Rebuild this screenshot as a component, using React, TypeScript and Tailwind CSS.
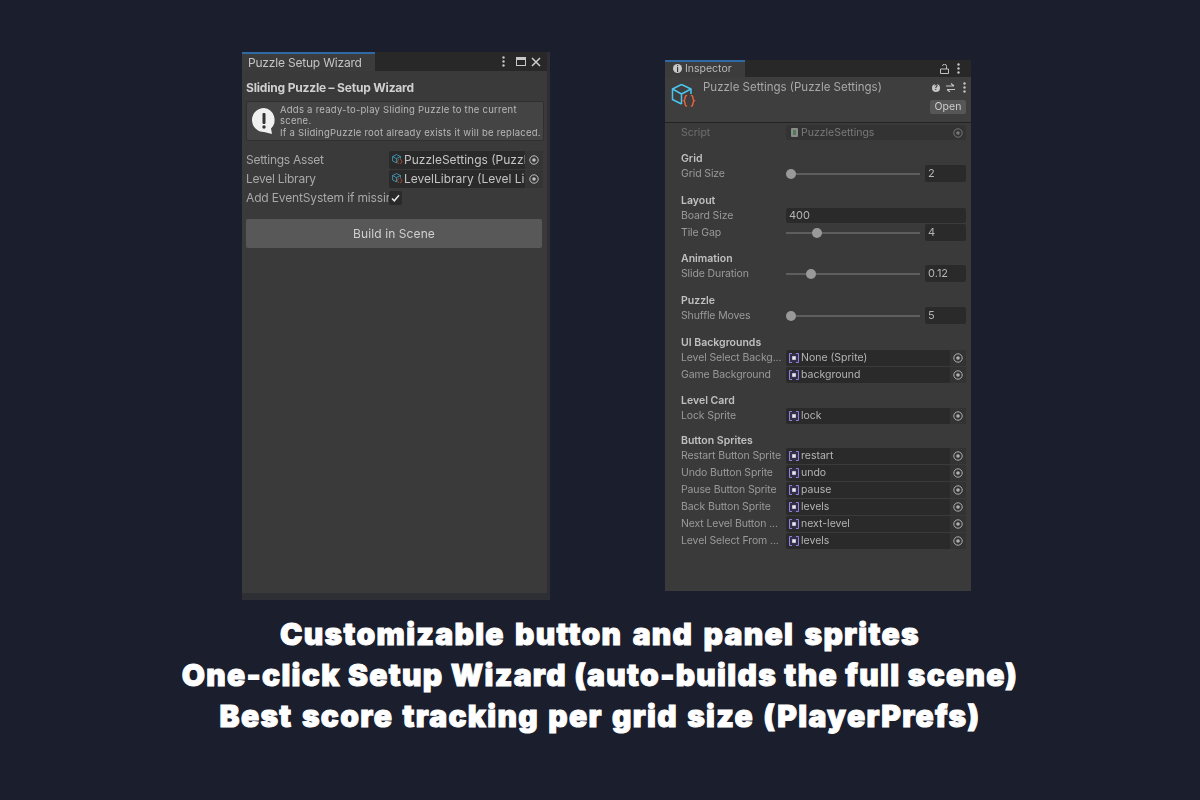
import type { ReactNode } from "react";

function Dots({ className = "" }: { className?: string }) {
  return (
    <svg width="3" height="11" viewBox="0 0 3 11" className={className}>
      <circle cx="1.5" cy="1.5" r="1.2" fill="#c4c4c4" />
      <circle cx="1.5" cy="5.5" r="1.2" fill="#c4c4c4" />
      <circle cx="1.5" cy="9.5" r="1.2" fill="#c4c4c4" />
    </svg>
  );
}

function Target({ color = "#c0c0c0" }: { color?: string }) {
  return (
    <svg width="10" height="10" viewBox="0 0 10 10">
      <circle cx="5" cy="5" r="4.2" fill="none" stroke={color} strokeWidth="1" />
      <circle cx="5" cy="5" r="1.8" fill={color} />
    </svg>
  );
}

function SpriteIcon() {
  return (
    <svg width="10" height="10" viewBox="0 0 10 10" className="shrink-0">
      <rect x="0.5" y="0.5" width="9" height="9" fill="#34304a" />
      <path d="M3 0.5 H0.5 V9.5 H3 M7 0.5 H9.5 V9.5 H7" fill="none" stroke="#8f7fe0" strokeWidth="1" />
      <rect x="3.2" y="3.2" width="3.6" height="3.6" fill="#e8e6f4" />
    </svg>
  );
}

function ScriptableIcon({ size = 26 }: { size?: number }) {
  return (
    <svg width={size} height={size} viewBox="0 0 26 26">
      <g fill="none" stroke="#4cc4ee" strokeWidth="1.5" strokeLinejoin="round">
        <path d="M10.5 1.5 L20 6 L20 11 M10.5 1.5 L1.5 6 L1.5 16.5 L10.5 21" />
        <path d="M1.5 6 L10.5 11 L20 6 M10.5 11 L10.5 21" />
      </g>
      <g fill="none" stroke="#e8603a" strokeWidth="1.5" strokeLinecap="round">
        <path d="M15.5 12.5 C13.5 12.5 14.5 17 13 17.7 C14.5 18.4 13.5 23 15.5 23" />
        <path d="M20.5 12.5 C22.5 12.5 21.5 17 23 17.7 C21.5 18.4 22.5 23 20.5 23" />
      </g>
    </svg>
  );
}

function TabHeader({
  tabWidth,
  height,
  tab,
  right,
}: {
  tabWidth: string;
  height: string;
  tab: ReactNode;
  right: ReactNode;
}) {
  return (
    <div className={`flex ${height} bg-[#282828]`}>
      <div className={`${tabWidth} flex items-center border-t-2 border-[#2f6aa3] bg-[#3c3c3c]`}>{tab}</div>
      <div className="flex flex-1 items-center justify-end">{right}</div>
    </div>
  );
}

function WizardField({ label, value }: { label: string; value: string }) {
  return (
    <div className="flex h-[19px] items-center">
      <div className="w-[143px] overflow-hidden whitespace-nowrap text-[12px] tracking-[-0.25px] text-[#a8a8a8]">{label}</div>
      <div className="flex h-[18px] w-[154px] items-center rounded-[2px] bg-[#2a2a2a] pl-[3px]">
        <ScriptableIcon size={11} />
        <div className="ml-px flex-1 overflow-hidden whitespace-nowrap text-[12px] text-[#c4c4c4]">{value}</div>
        <div className="flex h-[18px] w-[18px] shrink-0 items-center justify-center rounded-r-[2px] bg-[#353535]">
          <Target />
        </div>
      </div>
    </div>
  );
}

function WizardPanel() {
  return (
    <div className="flex h-[548px] w-[308px] flex-col bg-[#2d2f34] pr-[3px] pb-[7px] blur-[0.35px]">
      <TabHeader
        tabWidth="w-[133px]"
        height="h-[19px]"
        tab={<span className="ml-[6px] text-[12px] tracking-[-0.2px] text-[#c4c4c4]">Puzzle Setup Wizard</span>}
        right={
          <div className="flex items-center">
            <Dots className="mr-[11px]" />
            <div className="mr-[5px] h-[9px] w-[10px] border border-t-[3px] border-[#c8c8c8]" />
            <svg width="10" height="10" viewBox="0 0 10 10" className="mr-[6px]">
              <path d="M1 1 L9 9 M9 1 L1 9" stroke="#d0d0d0" strokeWidth="1.5" />
            </svg>
          </div>
        }
      />
      <div className="flex-1 bg-[#3a3a3a] pl-[4px] pr-[4px]">
        <div className="mt-[9px] h-[16px] text-[12px] font-bold leading-[16px] tracking-[-0.18px] text-[#d0d0d0]">
          Sliding Puzzle – Setup Wizard
        </div>
        <div className="mt-[5px] flex h-[40px] w-[298px] items-center rounded-[2px] border border-[#303030] bg-[#444444]">
          <svg width="26" height="28" viewBox="0 0 26 28" className="ml-[4px] shrink-0">
            <path d="M13 1 A12 12 0 1 0 13 25 L21 27 L20 21.5 A12 12 0 0 0 13 1 Z" fill="#f0f0f0" />
            <rect x="11.5" y="6" width="3" height="11" rx="1" fill="#333" />
            <circle cx="13" cy="20" r="1.7" fill="#333" />
          </svg>
          <div className="ml-[3px] whitespace-nowrap text-[9.5px] leading-[11.5px] tracking-[0.25px] text-[#b8b8b8]">
            Adds a ready-to-play Sliding Puzzle to the current
            <br />
            scene.
            <br />
            If a SlidingPuzzle root already exists it will be replaced.
          </div>
        </div>
        <div className="mt-[9px] flex flex-col">
          <WizardField label="Settings Asset" value="PuzzleSettings (Puzzle Settings)" />
          <WizardField label="Level Library" value="LevelLibrary (Level Library)" />
          <div className="flex h-[19px] items-center">
            <div className="w-[143px] overflow-hidden whitespace-nowrap text-[12px] tracking-[-0.15px] text-[#a8a8a8]">
              Add EventSystem if missing
            </div>
            <div className="flex h-[14px] w-[13px] items-center justify-center rounded-[2px] bg-[#2a2a2a]">
              <svg width="9" height="8" viewBox="0 0 9 8">
                <path d="M1 4.5 L3.3 6.8 L8 1.2" fill="none" stroke="#e8e8e8" strokeWidth="1.5" />
              </svg>
            </div>
          </div>
        </div>
        <div className="mt-[12px] flex h-[29px] w-[296px] items-center justify-center rounded-[2px] bg-[#585858] text-[12px] tracking-[0.1px] text-[#d0d0d0]">
          Build in Scene
        </div>
      </div>
    </div>
  );
}

function GroupTitle({ children, className = "" }: { children: ReactNode; className?: string }) {
  return <div className={`h-[14px] pt-px text-[10.5px] font-semibold leading-[14px] text-[#c0c0c0] ${className}`}>{children}</div>;
}

function InspectorRow({ label, children }: { label: string; children: ReactNode }) {
  return (
    <div className="flex h-[17px] items-center">
      <div className="w-[105px] whitespace-nowrap text-[10.5px] tracking-[-0.12px] text-[#9a9a9a]">{label}</div>
      <div className="flex w-[180px] items-center">{children}</div>
    </div>
  );
}

function SliderRow({ label, value, thumb }: { label: string; value: string; thumb: string }) {
  return (
    <InspectorRow label={label}>
      <div className="relative mr-[5px] h-[2px] w-[134px] bg-[#5e5e5e]">
        <div className={`absolute top-[-4px] h-[10px] w-[10px] rounded-full bg-[#999999] ${thumb}`} />
      </div>
      <div className="flex h-[17px] w-[41px] items-center rounded-[2px] bg-[#2a2a2a] pl-[3px] text-[11px] text-[#b4b4b4]">{value}</div>
    </InspectorRow>
  );
}

function SpriteRow({ label, value }: { label: string; value: string }) {
  return (
    <InspectorRow label={label}>
      <div className="flex h-[16px] w-full items-center rounded-[2px] bg-[#2a2a2a] pl-[3px]">
        <SpriteIcon />
        <div className="ml-[2px] flex-1 text-[10.5px] text-[#b4b4b4]">{value}</div>
        <div className="flex h-[16px] w-[16px] items-center justify-center rounded-r-[2px] bg-[#333333]">
          <Target color="#b0b0b0" />
        </div>
      </div>
    </InspectorRow>
  );
}

function InspectorPanel() {
  return (
    <div className="flex h-[531px] w-[306px] flex-col blur-[0.35px]">
      <TabHeader
        tabWidth="w-[80px]"
        height="h-[17px]"
        tab={
          <div className="ml-[8px] flex -translate-y-px items-center gap-[3px]">
            <div className="flex h-[9px] w-[9px] items-center justify-center rounded-full bg-[#c8c8c8] text-[8px] font-bold leading-none text-[#333]">
              i
            </div>
            <span className="text-[10.5px] text-[#b8b8b8]">Inspector</span>
          </div>
        }
        right={
          <div className="flex items-center">
            <svg width="9" height="10" viewBox="0 0 9 10" className="mr-[8px]">
              <path d="M0.5 9.5 V5 H8.5 V9.5 Z M6.5 5 V2.5 A2 2 0 0 0 2.5 2" fill="none" stroke="#c0c0c0" strokeWidth="1" />
            </svg>
            <Dots className="mr-[11px]" />
          </div>
        }
      />
      <div className="flex h-[46px] border-b border-[#222222] bg-[#3e3e3e]">
        <div className="ml-[6px] mt-[6px]">
          <ScriptableIcon />
        </div>
        <div className="ml-[6px] mt-[2px] flex-1 text-[11.5px] leading-[16px] text-[#a8a8a8]">
          Puzzle Settings (Puzzle Settings)
        </div>
        <div className="mr-[5px] mt-[5px] flex flex-col items-end">
          <div className="flex items-center">
            <div className="mr-[6px] flex h-[8px] w-[8px] items-center justify-center rounded-full bg-[#c4c4c4] text-[7px] font-bold leading-none text-[#333]">
              ?
            </div>
            <svg width="9" height="9" viewBox="0 0 9 9" className="mr-[8px]">
              <path d="M0 3 H8 M5 0.5 L8 3 M9 6.5 H1 M4 9 L1 6.5" fill="none" stroke="#c4c4c4" strokeWidth="1.2" />
            </svg>
            <Dots />
          </div>
          <div className="mt-[7px] flex h-[14px] w-[36px] items-center justify-center rounded-[2px] bg-[#565656] text-[10.5px] text-[#cccccc]">
            Open
          </div>
        </div>
      </div>
      <div className="flex-1 bg-[#3a3a3a] pl-[16px]">
        <div className="mt-[1px] flex h-[17px] items-center">
          <div className="w-[105px] text-[10.5px] text-[#6f6f6f]">Script</div>
          <div className="flex h-[15px] w-[180px] items-center rounded-[2px] bg-[#333333] pl-[5px]">
            <div className="flex h-[9px] w-[7px] items-center justify-center rounded-[1px] bg-[#8a8a8a]">
              <div className="h-[5px] w-[3px] bg-[#4f7a5c]" />
            </div>
            <div className="ml-[3px] flex-1 text-[10.5px] text-[#7a7a7a]">PuzzleSettings</div>
            <div className="mr-[3px]">
              <Target color="#777777" />
            </div>
          </div>
        </div>
        <GroupTitle className="mt-[10px]">Grid</GroupTitle>
        <SliderRow label="Grid Size" value="2" thumb="left-0" />
        <GroupTitle className="mt-[11px]">Layout</GroupTitle>
        <InspectorRow label="Board Size">
          <div className="flex h-[15px] w-full items-center rounded-[2px] bg-[#2a2a2a] pl-[3px] text-[11px] text-[#b4b4b4]">400</div>
        </InspectorRow>
        <SliderRow label="Tile Gap" value="4" thumb="left-[26px]" />
        <GroupTitle className="mt-[10px]">Animation</GroupTitle>
        <SliderRow label="Slide Duration" value="0.12" thumb="left-[20px]" />
        <GroupTitle className="mt-[11px]">Puzzle</GroupTitle>
        <SliderRow label="Shuffle Moves" value="5" thumb="left-0" />
        <GroupTitle className="mt-[11px]">UI Backgrounds</GroupTitle>
        <SpriteRow label="Level Select Backg..." value="None (Sprite)" />
        <SpriteRow label="Game Background" value="background" />
        <GroupTitle className="mt-[10px]">Level Card</GroupTitle>
        <SpriteRow label="Lock Sprite" value="lock" />
        <GroupTitle className="mt-[9px]">Button Sprites</GroupTitle>
        <SpriteRow label="Restart Button Sprite" value="restart" />
        <SpriteRow label="Undo Button Sprite" value="undo" />
        <SpriteRow label="Pause Button Sprite" value="pause" />
        <SpriteRow label="Back Button Sprite" value="levels" />
        <SpriteRow label="Next Level Button ..." value="next-level" />
        <SpriteRow label="Level Select From ..." value="levels" />
      </div>
    </div>
  );
}

export default function App() {
  return (
    <div className="h-[800px] w-[1200px] overflow-hidden bg-[#1b1e2d] pt-[52px] font-['Inter',sans-serif]">
      <div className="flex items-start pl-[242px]">
        <WizardPanel />
        <div className="ml-[115px] mt-[8px]">
          <InspectorPanel />
        </div>
      </div>
      <div className="mt-[14px] text-center text-[30px] font-black leading-[41px] tracking-[1.3px] text-white [-webkit-text-stroke:1px_white]">
        <div className="[word-spacing:3px]">Customizable button and panel sprites</div>
        <div>One-click Setup Wizard (auto-builds the full scene)</div>
        <div className="[word-spacing:2px]">Best score tracking per grid size (PlayerPrefs)</div>
      </div>
    </div>
  );
}
